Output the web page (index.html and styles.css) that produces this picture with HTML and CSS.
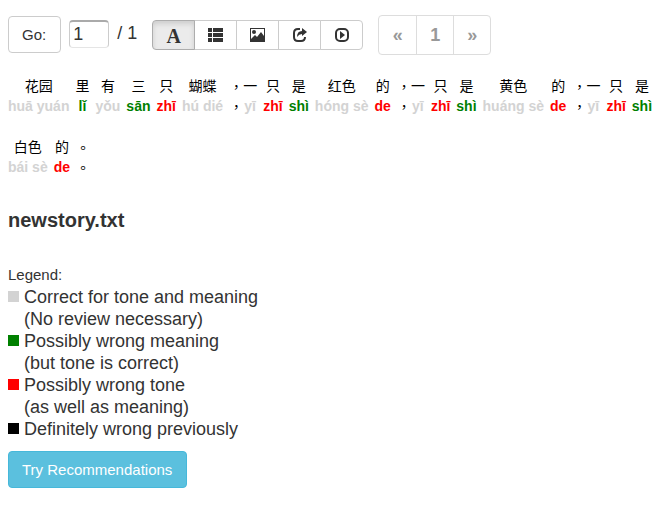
FILE: index.html
```html
<!DOCTYPE html>
<html lang="en">
<head>
<meta charset="utf-8">
<title>newstory.txt</title>
<link rel="stylesheet" href="styles.css">
</head>
<body>
<header class="toolbar">
  <button class="btn" type="button">Go:</button>
  <input class="page-input" type="text" value="1" aria-label="Page number">
  <span class="total">/ 1</span>
  <div class="modes">
    <button class="mode active" type="button" aria-label="Text"><span class="letter">A</span></button>
    <button class="mode" type="button" aria-label="List"><svg width="16" height="16" viewBox="0 0 16 16"><path d="M0 1h4v4H0zM5 1h10v4H5zM0 6h4v4H0zM5 6h10v4H5zM0 11h4v4H0zM5 11h10v4H5z"/></svg></button>
    <button class="mode" type="button" aria-label="Picture"><svg width="16" height="16" viewBox="0 0 16 16"><path fill-rule="evenodd" d="M0 1h15v14H0zM1 2v10l4-4 2 2 4-5 3 4V2z"/><circle cx="4" cy="5" r="2"/></svg></button>
    <button class="mode" type="button" aria-label="Share"><svg width="16" height="16" viewBox="0 0 16 16"><path class="line" d="M8 2H6Q2 2 2 6v4q0 4 4 4h3q4 0 4-4"/><path d="M10 1l5 4-5 4V7Q7 7 5 10q0-6 5-6z"/></svg></button>
    <button class="mode" type="button" aria-label="Play"><svg width="16" height="16" viewBox="0 0 16 16"><rect class="line" x="2" y="2" width="12" height="12" rx="4"/><path d="M6 4l5 4-5 4z"/></svg></button>
  </div>
  <nav class="pager" aria-label="Pages">
    <a href="#prev">«</a><a href="#page-1">1</a><a href="#next">»</a>
  </nav>
</header>
<main>
  <div class="story" lang="zh">
    <span class="word known"><span class="hanzi">花园</span><b>huā yuán</b></span>
    <span class="word meaning"><span class="hanzi">里</span><b>lǐ</b></span>
    <span class="word known"><span class="hanzi">有</span><b>yǒu</b></span>
    <span class="word meaning"><span class="hanzi">三</span><b>sān</b></span>
    <span class="word tone"><span class="hanzi">只</span><b>zhī</b></span>
    <span class="word known"><span class="hanzi">蝴蝶</span><b>hú dié</b></span>
    <span class="word comma"><span class="hanzi mark">，</span><span class="hanzi mark">，</span></span>
    <span class="word known"><span class="hanzi">一</span><b>yī</b></span>
    <span class="word tone"><span class="hanzi">只</span><b>zhī</b></span>
    <span class="word meaning"><span class="hanzi">是</span><b>shì</b></span>
    <span class="word known"><span class="hanzi">红色</span><b>hóng sè</b></span>
    <span class="word tone"><span class="hanzi">的</span><b>de</b></span>
    <span class="word comma"><span class="hanzi mark">，</span><span class="hanzi mark">，</span></span>
    <span class="word known"><span class="hanzi">一</span><b>yī</b></span>
    <span class="word tone"><span class="hanzi">只</span><b>zhī</b></span>
    <span class="word meaning"><span class="hanzi">是</span><b>shì</b></span>
    <span class="word known"><span class="hanzi">黄色</span><b>huáng sè</b></span>
    <span class="word tone"><span class="hanzi">的</span><b>de</b></span>
    <span class="word comma"><span class="hanzi mark">，</span><span class="hanzi mark">，</span></span>
    <span class="word known"><span class="hanzi">一</span><b>yī</b></span>
    <span class="word tone"><span class="hanzi">只</span><b>zhī</b></span>
    <span class="word meaning"><span class="hanzi">是</span><b>shì</b></span>
    <span class="word known"><span class="hanzi">白色</span><b>bái sè</b></span>
    <span class="word tone"><span class="hanzi">的</span><b>de</b></span>
    <span class="word"><span class="hanzi mark">。</span><span class="hanzi mark">。</span></span>
  </div>
  <h1>newstory.txt</h1>
  <p class="legend-title">Legend:</p>
  <ul class="legend">
    <li class="known"><span>Correct for tone and meaning<br>(No review necessary)</span></li>
    <li class="meaning"><span>Possibly wrong meaning<br>(but tone is correct)</span></li>
    <li class="tone"><span>Possibly wrong tone<br>(as well as meaning)</span></li>
    <li class="previous"><span>Definitely wrong previously</span></li>
  </ul>
  <button class="btn info" type="button">Try Recommendations</button>
</main>
</body>
</html>
```
FILE: styles.css
```css
* { box-sizing: border-box; }
body {
  margin: 0;
  padding: 15px 0 15px 8px;
  background: #fff;
  color: #333;
  font: 15px/20px "Liberation Sans", "Noto Sans CJK SC", sans-serif;
}
button, input { font: inherit; color: inherit; }
.toolbar { display: flex; height: 40px; }
.btn {
  height: 37px;
  padding: 0 14px 0 13px;
  border: 1px solid #ccc;
  border-radius: 4px;
  background: #fff;
}
.toolbar .btn { margin-top: 1px; }
.page-input {
  width: 40px;
  height: 28px;
  margin: 5px 8px 0;
  padding: 0 3px;
  border: 1px solid #ccc;
  border-top: 2px solid #aaa;
  border-bottom-color: #e5e5e5;
  border-radius: 4px;
  background: #fff;
  font-size: 18px;
}
.total { margin: 8px 15px 0 0; font-size: 18px; }
.modes { display: flex; height: 30px; margin: 5px 15px 0 0; }
.mode {
  display: flex;
  align-items: center;
  justify-content: center;
  width: 43px;
  margin-left: -1px;
  padding: 0;
  border: 1px solid #ccc;
  background: #fff;
}
.mode:first-child { margin-left: 0; border-radius: 4px 0 0 4px; }
.mode:last-child { border-radius: 0 4px 4px 0; }
.mode.active {
  z-index: 1;
  border-color: #adadad;
  background: #ebebeb;
  box-shadow: inset 0 3px 5px rgba(0, 0, 0, .125);
}
.letter { padding-top: 2px; font: bold 20px/28px "Liberation Serif", serif; }
.mode svg { fill: #333; }
.mode .line { fill: none; stroke: #333; stroke-width: 2; }
.pager { display: flex; height: 40px; }
.pager a {
  width: 38px;
  margin-right: -1px;
  border: 1px solid #ddd;
  color: #999;
  font-size: 18px;
  font-weight: bold;
  line-height: 38px;
  text-align: center;
  text-decoration: none;
}
.pager a:first-child { width: 39px; border-radius: 4px 0 0 4px; }
.pager a:last-child { border-radius: 0 4px 4px 0; }
.story { display: flex; flex-wrap: wrap; gap: 20px 6px; margin-top: 21px; }
.word { display: flex; flex-direction: column; align-items: center; min-width: 14px; }
.word.comma { margin-right: -6px; }
.hanzi { color: #000; font-size: 14px; line-height: 20px; }
.mark { font-family: "Noto Sans CJK TC", sans-serif; }
.word b { font-size: 14px; line-height: 21px; white-space: nowrap; }
.known { color: #d3d3d3; }
.meaning { color: green; }
.tone { color: red; }
.previous { color: #000; }
h1 { margin: 30px 0 32px; font-size: 20px; line-height: 24px; }
.legend-title { margin: 0; line-height: 22px; }
.legend { margin: 0 0 11px; padding: 0; list-style: none; font-size: 18px; line-height: 22px; }
.legend li { display: flex; gap: 5px; }
.legend li::before {
  content: "";
  width: 11px;
  height: 11px;
  margin-top: 5px;
  background: currentColor;
}
.legend span { color: #333; }
.btn.info { border-color: #46b8da; background: #5bc0de; color: #fff; }
```
